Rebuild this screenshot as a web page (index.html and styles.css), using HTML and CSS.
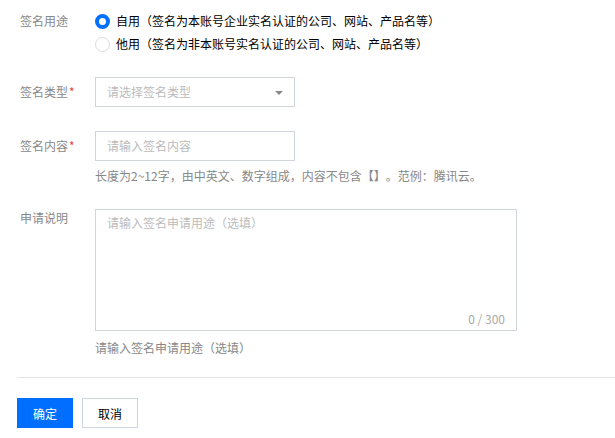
FILE: index.html
```html
<!DOCTYPE html>
<html lang="zh-CN">
<head>
    <meta charset="UTF-8">
    <meta name="viewport" content="width=device-width, initial-scale=1.0">
    <title>签名申请</title>
    <link rel="stylesheet" href="styles.css">
</head>
<body>
    <div class="form">
        <!-- 签名用途 -->
        <div class="row">
            <div class="label">签名用途</div>
            <div class="radio-group">
                <label class="radio checked"><span class="dot"></span>自用（签名为本账号企业实名认证的公司、网站、产品名等）</label>
                <label class="radio"><span class="dot"></span>他用（签名为非本账号实名认证的公司、网站、产品名等）</label>
            </div>
        </div>

        <div class="row">
            <div class="label label-box">签名类型<span class="req">*</span></div>
            <div class="select">
                <span class="placeholder">请选择签名类型</span>
                <span class="caret"></span>
            </div>
        </div>

        <div class="row">
            <div class="label label-box">签名内容<span class="req">*</span></div>
            <div class="field">
                <div class="input"><span class="placeholder">请输入签名内容</span></div>
                <div class="help">长度为2~12字，由中英文、数字组成，内容不包含【】。范例：腾讯云。</div>
            </div>
        </div>

        <div class="row">
            <div class="label">申请说明</div>
            <div class="field">
                <div class="textarea">
                    <span class="placeholder">请输入签名申请用途（选填）</span>
                    <span class="count">0 / 300</span>
                </div>
                <div class="help">请输入签名申请用途（选填）</div>
            </div>
        </div>
    </div>

    <div class="footer">
        <button class="btn btn-primary">确定</button>
        <button class="btn">取消</button>
    </div>
</body>
</html>
```

FILE: styles.css
```css
* {
    margin: 0;
    padding: 0;
    box-sizing: border-box;
}

body {
    font-family: "Noto Sans CJK SC", "Liberation Sans", sans-serif;
    font-size: 12px;
    line-height: 18px;
    color: #000;
    background: #fff;
    text-spacing-trim: space-all;
}

.form {
    display: flex;
    flex-direction: column;
    gap: 24px;
    padding: 12px 0 0 20px;
}

.row {
    display: flex;
    align-items: flex-start;
}

.label {
    width: 75px;
    flex-shrink: 0;
    color: #888;
}

.label-box {
    padding-top: 6px;
}

.req {
    color: #e54545;
    margin-left: 1px;
}

/* radios */
.radio-group {
    display: flex;
    flex-direction: column;
    gap: 5px;
}

.radio {
    display: flex;
    align-items: center;
    gap: 6px;
    white-space: nowrap;
}

.dot {
    width: 15px;
    height: 15px;
    border-radius: 50%;
    border: 1px solid #d8dbe0;
    background: #fff;
}

.radio.checked .dot {
    border: 4px solid #006eff;
}

/* inputs */
.placeholder {
    color: #bbb;
}

.select,
.input {
    position: relative;
    width: 200px;
    height: 30px;
    border: 1px solid #d0d5dd;
    padding: 5px 11px;
}

.caret {
    position: absolute;
    right: 11px;
    top: 13px;
    width: 0;
    height: 0;
    border-left: 4px solid transparent;
    border-right: 4px solid transparent;
    border-top: 4px solid #888;
}

.field {
    display: flex;
    flex-direction: column;
}

.help {
    margin-top: 6px;
    color: #888;
}

.textarea {
    position: relative;
    width: 422px;
    height: 122px;
    border: 1px solid #d0d5dd;
    padding: 4px 11px;
}

.count {
    position: absolute;
    right: 11px;
    bottom: 2px;
    color: #aaa;
}

.field .textarea + .help {
    margin-top: 8px;
}

/* footer */
.footer {
    margin: 20px 0 0 17px;
    padding-top: 20px;
    border-top: 1px solid #e5e5e5;
    display: flex;
    gap: 9px;
}

.btn {
    width: 56px;
    height: 30px;
    font-family: inherit;
    font-size: 12px;
    color: #000;
    background: #fff;
    border: 1px solid #cfd5de;
    cursor: pointer;
}

.btn-primary {
    background: #006eff;
    border-color: #006eff;
    color: #fff;
}
```
